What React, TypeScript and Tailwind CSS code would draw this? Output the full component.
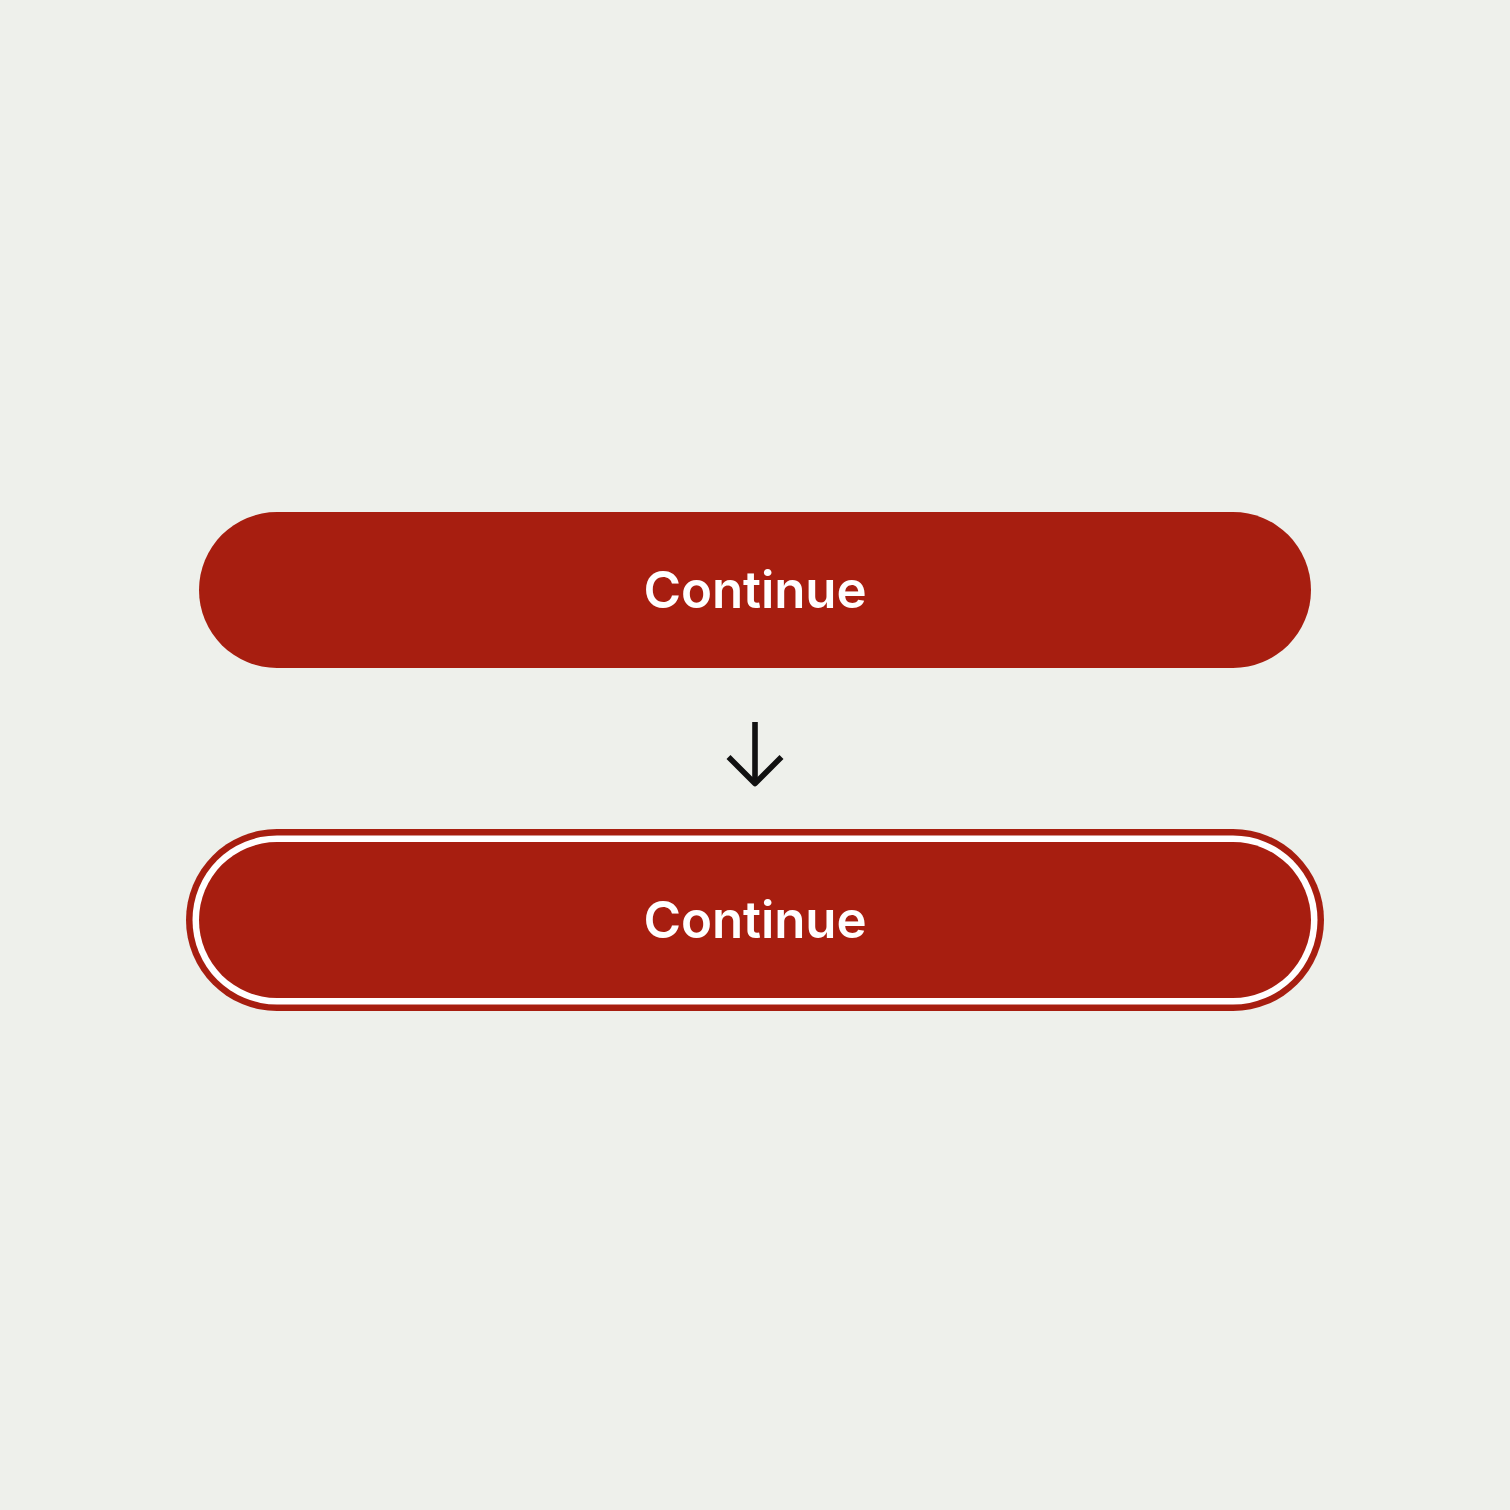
import React from 'react';

const ArrowDown: React.FC = () => (
  <svg width="60" height="66" viewBox="0 0 60 66" fill="none" className="block">
    <path d="M30 0 V62" stroke="#111111" strokeWidth="5.6" />
    <path d="M3.5 35 L30 61.5 L56.5 35" stroke="#111111" strokeWidth="5.6" strokeLinejoin="round" />
  </svg>
);

const ContinueButton: React.FC<{ focused?: boolean }> = ({ focused }) => (
  <button
    className={`flex h-[156px] w-[1112px] items-center justify-center rounded-full bg-[#a71e10] text-[51px] font-semibold tracking-[-0.1px] text-white ${
      focused ? 'shadow-[0_0_0_6.5px_#ffffff,0_0_0_13px_#a71e10]' : ''
    }`}
    style={{ fontFamily: 'Inter, "Noto Sans", sans-serif' }}
  >
    Continue
  </button>
);

export default function App() {
  return (
    <div className="flex h-[1510px] w-full flex-col items-center justify-center bg-[#eef0eb]">
      <ContinueButton />
      <div className="mt-[54px] mb-[55px] h-[65px]">
        <ArrowDown />
      </div>
      <ContinueButton focused />
    </div>
  );
}
